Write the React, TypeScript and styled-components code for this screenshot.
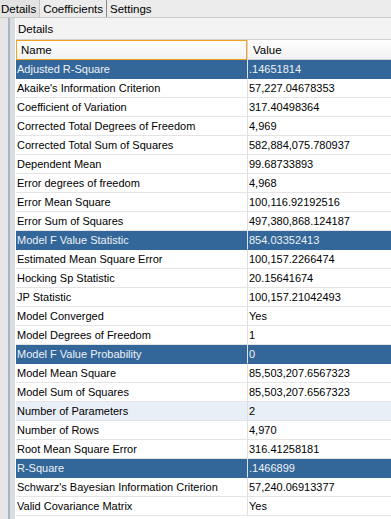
import React from 'react'
import styled, { createGlobalStyle } from 'styled-components'

const GlobalStyle = createGlobalStyle`
  body {
    margin: 0;
    font-family: "Liberation Sans", Arial, sans-serif;
    font-size: 11px;
    color: #000;
    background: #fff;
  }
`

const Window = styled.div`
  display: flex;
  flex-direction: column;
  width: 391px;
  height: 519px;
  overflow: hidden;
`

const TabBar = styled.div`
  display: flex;
  align-items: stretch;
  height: 17px;
  background: #ececec;
  border-bottom: 1px solid #c9c9c9;
`

const Tab = styled.div<{ active?: boolean }>`
  display: flex;
  align-items: center;
  padding: 0 3px 0 1px;
  font-size: 11.5px;
  background: ${ props => props.active ? '#e3e3e3' : 'transparent' };
  border-right: 1px solid ${ props => props.active ? '#c4c4c4' : '#8a8a8a' };
  margin-right: 2px;

  &:last-child {
    border-right: none;
  }
`

const Body = styled.div`
  display: flex;
  flex: 1;
  min-height: 0;
`

const SideRail = styled.div`
  width: 16px;
  flex-shrink: 0;
  background: linear-gradient(to right,
    #e6e6e6 0, #e6e6e6 8px,
    #a8b4c2 8px, #a8b4c2 10px,
    #d9dee5 10px, #d9dee5 15px,
    #ffffff 15px);
`

const Panel = styled.div`
  flex: 1;
  display: flex;
  flex-direction: column;
  min-width: 0;
`

const SectionHeader = styled.div`
  height: 21px;
  display: flex;
  align-items: center;
  padding-left: 2px;
  background: #f3f3f3;
  border-bottom: 1px solid #d2d2d2;
  font-size: 11.5px;
`

const Table = styled.div`
  display: grid;
  grid-template-columns: 231px 1fr;
`

const HeadCell = styled.div<{ focused?: boolean }>`
  height: 20px;
  box-sizing: border-box;
  display: flex;
  align-items: center;
  padding-left: ${ props => props.focused ? '4px' : '5px' };
  background: linear-gradient(#ffffff, #f1f1f1);
  border: ${ props => props.focused ? '1px solid #f4a21c' : 'none' };
  border-bottom: 1px solid ${ props => props.focused ? '#f4a21c' : '#cfcfcf' };
  border-left: ${ props => props.focused ? '1px solid #f4a21c' : '1px solid #d6d6d6' };
  font-size: 11.5px;
`

const Cell = styled.div<{ tone: 'plain' | 'selected' | 'hover'; value?: boolean }>`
  height: 19px;
  box-sizing: border-box;
  display: flex;
  align-items: center;
  padding-left: 1px;
  white-space: nowrap;
  overflow: hidden;
  border-bottom: 1px solid ${ props => props.tone === 'selected' ? '#336699' : '#e4e4e4' };
  border-left: ${ props => props.value ? '1px solid #e0e0e0' : 'none' };
  background: ${ props => props.tone === 'selected' ? '#336699' : props.tone === 'hover' ? '#e9eff7' : '#ffffff' };
  color: ${ props => props.tone === 'selected' ? '#eef2f7' : '#000' };
`

type Row = [string, string]

const rows: Row[] = [
  ['Adjusted R-Square', '.14651814'],
  ['Akaike\'s Information Criterion', '57,227.04678353'],
  ['Coefficient of Variation', '317.40498364'],
  ['Corrected Total Degrees of Freedom', '4,969'],
  ['Corrected Total Sum of Squares', '582,884,075.780937'],
  ['Dependent Mean', '99.68733893'],
  ['Error degrees of freedom', '4,968'],
  ['Error Mean Square', '100,116.92192516'],
  ['Error Sum of Squares', '497,380,868.124187'],
  ['Model F Value Statistic', '854.03352413'],
  ['Estimated Mean Square Error', '100,157.2266474'],
  ['Hocking Sp Statistic', '20.15641674'],
  ['JP Statistic', '100,157.21042493'],
  ['Model Converged', 'Yes'],
  ['Model Degrees of Freedom', '1'],
  ['Model F Value Probability', '0'],
  ['Model Mean Square', '85,503,207.6567323'],
  ['Model Sum of Squares', '85,503,207.6567323'],
  ['Number of Parameters', '2'],
  ['Number of Rows', '4,970'],
  ['Root Mean Square Error', '316.41258181'],
  ['R-Square', '.1466899'],
  ['Schwarz\'s Bayesian Information Criterion', '57,240.06913377'],
  ['Valid Covariance Matrix', 'Yes'],
]

const selected = new Set([0, 9, 15, 21])
const hovered = 18

const App = () => {
  return (
    <Window>
      <GlobalStyle />
      <TabBar>
        <Tab active>Details</Tab>
        <Tab>Coefficients</Tab>
        <Tab>Settings</Tab>
      </TabBar>
      <Body>
        <SideRail />
        <Panel>
          <SectionHeader>Details</SectionHeader>
          <Table>
            <HeadCell focused>Name</HeadCell>
            <HeadCell>Value</HeadCell>
            { rows.map(([name, value], i) => {
              const tone = selected.has(i) ? 'selected' : i === hovered ? 'hover' : 'plain'
              return (
                <React.Fragment key={ name }>
                  <Cell tone={ tone }>{ name }</Cell>
                  <Cell tone={ tone } value>{ value }</Cell>
                </React.Fragment>
              )
            }) }
          </Table>
        </Panel>
      </Body>
    </Window>
  )
}

export default App
